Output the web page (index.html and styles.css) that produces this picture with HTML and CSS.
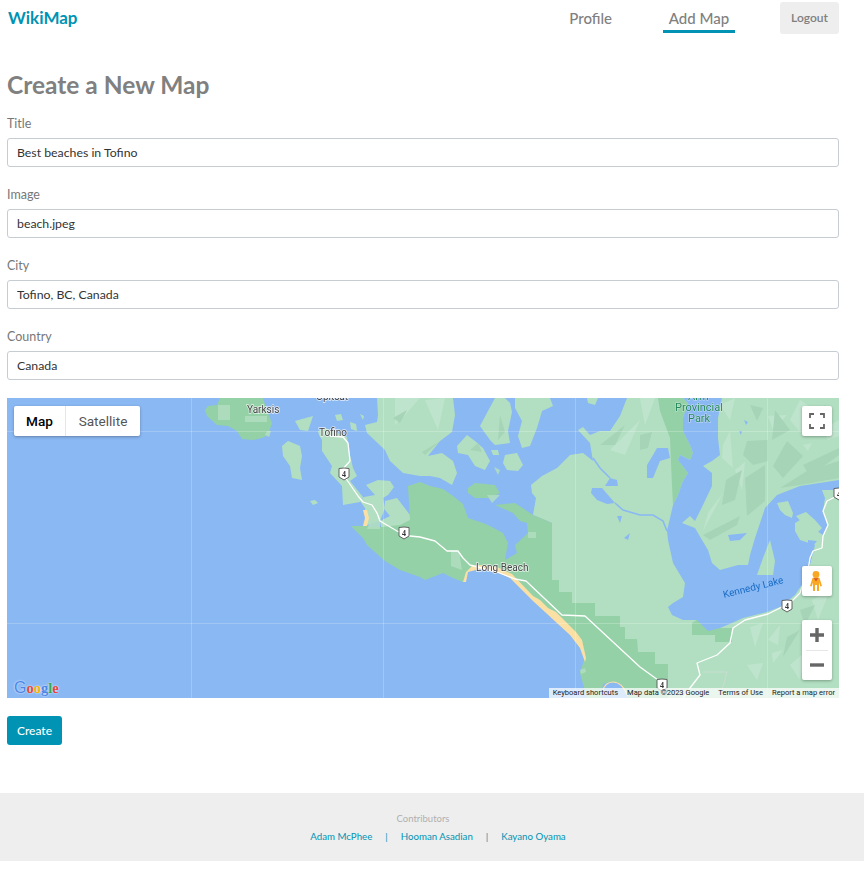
FILE: index.html
```html
<!DOCTYPE html>
<html lang="en">
<head>
<meta charset="utf-8">
<title>WikiMap</title>
<link rel="stylesheet" href="styles.css">
</head>
<body>
<header class="topbar">
  <a class="brand" href="#">WikiMap</a>
  <nav class="nav">
    <a class="nav-link" href="#">Profile</a>
    <a class="nav-link active" href="#">Add Map</a>
    <button class="logout" type="button">Logout</button>
  </nav>
</header>
<main class="content">
  <h1 class="title">Create a New Map</h1>
  <form class="form">
    <div class="field"><label class="label">Title</label><input class="input" value="Best beaches in Tofino"></div>
    <div class="field"><label class="label">Image</label><input class="input" value="beach.jpeg"></div>
    <div class="field"><label class="label">City</label><input class="input" value="Tofino, BC, Canada"></div>
    <div class="field"><label class="label">Country</label><input class="input" value="Canada"></div>
    <div class="map">
      <svg class="map-art" viewBox="7 398 832 300" width="832" height="300">
        <defs>
          <g id="shield">
            <path d="M-5 -5.5Q0 -6.5 5 -5.5V3L0 6L-5 3Z" fill="#fff" stroke="#555" stroke-width="0.9"/>
            <text class="shield-num" x="0" y="2.6" text-anchor="middle">4</text>
          </g>
        </defs>
        <rect class="water" x="7" y="398" width="832" height="300"/>
        <!-- main land mass -->
        <polygon class="land" points="627,398 839,398 839,698 640,698 552,600 552,523 533,515 536,498 532,493 531,485 542,476 557,468 570,455 583,453 593,461 590,443 578,430 583,427 590,435 600,431 610,431 620,416"/>
        <!-- hill shading -->
        <g class="hill-light">
          <polygon points="723,445 730,431 733,468 722,458"/>
          <polygon points="703,531 723,493 708,513"/>
          <polygon points="768,416 787,415 773,430"/>
          <polygon points="785,451 790,461 787,475 783,465"/>
          <polygon points="803,445 812,443 808,451"/>
          <polygon points="720,405 735,398 730,420"/>
          <polygon points="640,398 655,398 645,425"/>
          <polygon points="610,450 640,420 625,455"/>
          <polygon points="750,627 763,623 755,647"/>
          <polygon points="772,653 783,650 773,663"/>
          <polygon points="747,665 763,663 757,680"/>
          <polygon points="812,600 830,590 818,620"/>
          <polygon points="735,470 745,462 742,490"/>
          <polygon points="790,420 800,400 815,410 800,432"/>
          <polygon points="822,430 839,420 839,436 828,440"/>
          <polygon points="768,640 780,625 778,645"/>
          <polygon points="790,665 805,652 800,680"/>
        </g>
        <g class="hill-dark">
          <polygon points="747,441 768,440 768,461 753,465 743,455"/>
          <polygon points="745,478 765,465 765,501 747,516"/>
          <polygon points="703,535 740,516 737,525 710,540"/>
          <polygon points="773,466 787,441 803,456 783,478"/>
          <polygon points="803,465 839,448 839,455 810,476"/>
          <polygon points="750,405 763,408 757,421"/>
          <polygon points="780,488 807,471 839,461 839,478 800,485"/>
          <polygon points="787,637 800,630 783,657"/>
          <polygon points="815,650 830,640 825,670"/>
          <polygon points="640,435 652,432 648,448 640,450"/>
          <polygon points="600,445 625,425 615,445"/>
          <polygon points="726,480 742,470 735,500 722,505"/>
          <polygon points="775,410 790,430 772,440"/>
          <polygon points="810,420 825,405 830,425"/>
          <polygon points="690,540 702,545 695,552"/>
          <polygon points="800,610 815,605 805,625"/>
        </g>
        <!-- islands and peninsulas -->
        <g class="land">
          <polygon points="295,421 313,416 308,431 300,430"/>
          <polygon points="282,446 288,441 300,446 302,456 300,468 302,480 292,478 290,466 283,456"/>
          <polygon points="310,501 315,500 318,503 313,505"/>
          <polygon points="318,431 325,428 347,437 350,455 353,468 357,476 350,481 363,497 360,502 343,505 342,486 330,473 332,466 322,451 322,440 319,435"/>
          <polygon points="366,485 378,480 390,481 394,487 388,495 383,498 385,508 380,521 367,525 365,508 360,501 364,497 375,495"/>
          <polygon points="385,501 397,498 410,515 412,521 403,526 387,540 382,531 380,521 390,516 385,510"/>
          <polygon points="377,398 453,398 455,415 452,432 440,441 428,456 442,453 453,461 457,473 452,485 440,478 430,476 420,476 403,473 390,461 385,450 367,433 365,425 377,422 378,415"/>
          <polygon points="480,426 488,411 495,398 505,398 510,403 512,412 508,431 510,443 495,445 490,440"/>
          <polygon points="515,398 550,398 553,406 542,411 537,428 530,446 522,448 518,436 522,421 515,408"/>
          <polygon points="457,446 467,435 475,441 483,448 490,461 485,470 475,466 468,455 458,453"/>
          <polygon points="491,450 498,450 499,455 493,455"/>
          <polygon points="505,455 517,453 523,465 518,471 507,470 503,463"/>
          <polygon points="587,398 598,398 595,405 588,403"/>
          <polygon points="335,415 341,414 343,420 337,421"/>
          <polygon points="350,422 356,424 357,431 351,429"/>
          <polygon points="360,414 364,416 363,420"/>
        </g>
        <g class="hill-light">
          <polygon points="395,398 420,398 405,415 395,425"/>
          <polygon points="425,400 445,398 438,430"/>
        </g>
        <g class="hill-dark">
          <polygon points="393,418 407,410 400,423"/>
          <polygon points="422,452 440,441 425,455"/>
          <polygon points="470,450 478,443 482,452"/>
          <polygon points="500,415 505,432 498,440"/>
        </g>
        <!-- provincial park green -->
        <g class="park">
          <polygon points="205,410 208,406 217,405 220,398 263,398 267,411 272,423 268,435 262,438 253,440 242,439 237,431 228,426 217,425 207,416"/>
          <polygon points="468,488 475,483 495,485 500,493 490,498 475,498 468,493"/>
          <polygon points="351,526 367,526 382,527 400,525 410,520 408,486 420,482 430,486 443,489 453,496 463,504 468,518 483,523 490,526 503,533 508,543 505,560 517,553 515,545 528,533 527,523 520,521 513,513 495,505 515,503 533,515 552,523 552,580 559,580 559,592 572,592 572,603 595,603 595,616 620,616 620,627 625,627 625,639 637,639 638,652 655,652 655,664 668,664 668,698 587,698 580,673 585,657 580,645 560,623 533,600 510,577 497,572 480,568 468,570 463,582 453,578 443,573 430,578 425,580 420,577 400,570 385,561 367,545 363,538"/>
          <polygon points="658,398 683,398 688,403 683,418 683,431 690,445 693,453 690,460 680,455 678,460 688,473 683,481 678,495 673,505 672,485 670,438 660,411"/>
          <polygon points="692,623 700,618 713,628 732,628 732,642 715,642 715,635 692,635"/>
        </g>
        <g class="patch">
          <polygon points="218,405 230,405 230,420 218,420"/>
          <polygon points="245,416 267,416 267,422 245,422"/>
          <polygon points="267,431 271,431 269,437 265,435"/>
          <polygon points="487,495 500,495 492,503"/>
          <polygon points="528,532 536,532 536,538 528,538"/>
          <polygon points="451,551 459,551 462,570 451,566"/>
          <polygon points="494,467 500,470 498,475"/>
          <polygon points="337,469 345,468 347,480 337,478"/>
          <polygon points="375,510 380,520 380,529 367,529"/>
          <polygon points="580,670 585,668 586,672 581,674"/>
        </g>
        <!-- lakes -->
        <g class="water">
          <polygon points="683,398 722,398 718,418 718,438 720,455 712,461 703,466 712,473 712,486 703,505 695,521 690,516 682,523 695,528 702,540 708,550 712,563 720,570 738,565 748,565 750,555 755,538 765,508 777,495 800,486 839,480 839,490 822,490 825,498 823,511 828,525 823,535 812,528 800,520 795,523 795,531 800,540 815,545 813,553 810,565 803,583 795,595 780,607 767,612 743,618 732,623 720,628 708,631 697,620 683,620 672,615 668,607 673,603 683,597 685,583 673,563 668,540 667,531 673,505 678,495 683,481 688,473 678,460 680,455 690,460 693,453 690,445 683,431 683,418 688,403"/>
          <polygon points="592,488 602,488 615,503 607,504 597,500 591,493"/>
          <polygon points="610,478 617,480 618,486 611,486 605,486"/>
          <polygon points="657,448 668,448 670,458 660,461 653,478 647,478 647,465 653,455"/>
          <polygon points="728,535 747,533 740,540 730,541"/>
          <polygon points="617,516 622,516 620,523"/>
          <polygon points="624,538 630,533 628,540"/>
          <polygon points="744,420 748,422 746,425"/>
          <polygon points="739,431 742,431 741,435"/>
          <polygon points="603,684 610,682 620,683 628,698 601,698"/>
        </g>
        <g class="land">
          <polygon points="777,503 788,501 793,513 792,518 785,515 780,510"/>
          <polygon points="770,540 775,561 773,575 757,575 763,558"/>
          <polygon points="796,516 806,512 815,520 822,528 815,535 806,527"/>
        </g>
        <polygon class="water" points="808,540 817,541 813,546 808,546"/>
        <polyline class="river" points="593,458 600,468 610,478"/>
        <polyline class="river" points="615,503 623,510 640,515 653,515 663,521 667,531"/>
        <!-- beaches -->
        <g class="beach">
          <polygon points="463,582 466,572 472,566 480,565 497,567 512,574 533,596 540,600 548,608 556,612 566,622 576,632 582,640 586,658 585,662 580,648 570,635 558,624 545,612 533,601 510,578 497,572 480,569 468,572 466,582"/>
          <polygon points="363,510 367,510 369,518 367,526 363,526 365,518"/>
          <path class="beach-line" d="M602 692 Q605 682 613 682 Q622 682 628 696"/>
        </g>
        <!-- tile seams -->
        <g class="seam">
          <line x1="7" y1="431.5" x2="839" y2="431.5"/>
          <line x1="7" y1="623.5" x2="839" y2="623.5"/>
          <line x1="191.5" y1="398" x2="191.5" y2="698"/>
          <line x1="383.5" y1="398" x2="383.5" y2="698"/>
          <line x1="575.5" y1="398" x2="575.5" y2="698"/>
          <line x1="767.5" y1="398" x2="767.5" y2="698"/>
        </g>
        <!-- roads -->
        <g class="road">
          <polyline points="330,436 343,437 348,443 350,461 342,470 344,474 347,480 358,496 363,502 372,505 377,513 380,521 397,531 404,533 410,536 420,537 435,541 447,551 458,551 463,558 470,565 497,572 515,579 526,581 562,615 585,616 640,667 658,680 664,695"/>
          <polyline points="683,698 690,688 700,675 697,663 717,655 730,643 733,628 745,620 768,614 782,607 787,606 800,593 808,570 810,558 813,551 822,548 823,536 828,525 823,511 827,501 837,496"/>
        </g>
        <polyline class="track" points="703,672 727,672 722,690"/>
        <use href="#shield" x="344" y="474"/>
        <use href="#shield" x="404" y="533"/>
        <use href="#shield" x="662" y="685"/>
        <use href="#shield" x="787" y="606"/>
        <use href="#shield" x="839" y="494"/>
        <!-- labels -->
        <text class="place" x="316" y="400">Opitsat</text>
        <text class="place" x="247" y="412.5">Yarksis</text>
        <text class="place" x="319" y="435.5">Tofino</text>
        <text class="place" x="476" y="571">Long Beach</text>
        <text class="park-label" x="688" y="400">Arm</text>
        <text class="park-label" x="675" y="411">Provincial</text>
        <text class="park-label" x="688" y="421.5">Park</text>
        <text class="lake-label" transform="translate(724 598) rotate(-14)">Kennedy Lake</text>
      </svg>

      <div class="map-type">
        <span class="map-type-btn selected">Map</span>
        <span class="map-type-btn">Satellite</span>
      </div>

      <div class="ctl fullscreen">
        <svg viewBox="0 0 30 30" width="30" height="30">
          <path class="ctl-line" d="M8 12V8H12M18 8H22V12M22 18V22H18M12 22H8V18"/>
        </svg>
      </div>

      <div class="ctl pegman">
        <svg viewBox="0 0 30 30" width="30" height="30">
          <circle cx="14" cy="8.5" r="3.4" fill="#f9a825"/>
          <path d="M10.5 12Q14 10.5 17.5 12L20 20L18.300 20.500L17 16.500V25H15V19H13V25H11V16.500L9.700 20.500L8 20Z" fill="#f9a825"/>
          <path d="M11.500 11.800L14 15.500L16.500 11.800L14 12.500Z" fill="#d9542b"/>
        </svg>
      </div>

      <div class="ctl zoom">
        <svg viewBox="0 0 30 60" width="30" height="60">
          <path class="ctl-thick" d="M15 8V22M8 15H22"/>
          <line class="ctl-divider" x1="4" y1="30.500" x2="26" y2="30.500"/>
          <path class="ctl-thick" d="M8 45H22"/>
        </svg>
      </div>

      <div class="google"><span class="g-cap">G</span><span class="g-r">o</span><span class="g-y">o</span><span class="g-b">g</span><span class="g-g">l</span><span class="g-r">e</span></div>

      <div class="attribution">
        <span>Keyboard shortcuts</span>
        <span>Map data ©2023 Google</span>
        <span>Terms of Use</span>
        <span>Report a map error</span>
      </div>
    </div>
    <button class="create" type="button">Create</button>
  </form>
</main>
<footer class="footer">
  <p class="contrib">Contributors</p>
  <p class="people">
    <a href="#">Adam McPhee</a><span class="bar">|</span><a href="#">Hooman Asadian</a><span class="bar">|</span><a href="#">Kayano Oyama</a>
  </p>
</footer>
</body>
</html>
```
FILE: styles.css
```css
* { box-sizing: border-box; }

body {
  margin: 0;
  background: #fff;
  font-family: "Lato", "Noto Sans", sans-serif;
  color: #808080;
}

a { text-decoration: none; }

.topbar {
  display: flex;
  justify-content: space-between;
  align-items: flex-start;
  padding: 2px 25px 0 8px;
  height: 34px;
}

.brand {
  color: #0093b3;
  font-size: 17px;
  font-weight: 700;
  line-height: 32px;
}

.nav {
  display: flex;
  gap: 45px;
  align-items: flex-start;
}

.nav-link {
  color: #808080;
  font-size: 15px;
  font-weight: 500;
  line-height: 32px;
  height: 31px;
  padding: 0 6px;
}

.nav-link.active {
  border-bottom: 3px solid #0093b3;
  width: 72px;
  text-align: center;
  padding: 0;
}

.logout {
  width: 59px;
  height: 32px;
  border: 0;
  border-radius: 3px;
  background: #eee;
  color: #808080;
  font: 600 12px "Lato", sans-serif;
  padding-bottom: 2px;
}

.content { padding: 36px 25px 0 7px; }

.title {
  margin: 0 0 16px;
  font-size: 24.500px;
  line-height: 30px;
  font-weight: 700;
  color: #808080;
}

.form { display: flex; flex-direction: column; }

.field {
  display: flex;
  flex-direction: column;
  gap: 6px;
  margin-bottom: 20px;
}

.field:nth-child(4) { margin-bottom: 18px; }

.label {
  font-size: 12.500px;
  line-height: 16px;
  color: #777;
}

.input {
  height: 29px;
  width: 100%;
  border: 1px solid #c6ccd2;
  border-radius: 3px;
  padding: 0 9px;
  font: 12.300px "Lato", sans-serif;
  color: #333;
  background: #fff;
}

.map {
  position: relative;
  width: 832px;
  height: 300px;
  overflow: hidden;
  font-family: "Roboto", sans-serif;
}

.map-art { display: block; filter: blur(0.35px); }

.water { fill: #8ab8f3; }
.land { fill: #b2dfc1; }
.park { fill: #94d1a6; }
.patch { fill: #b2dfc1; opacity: 0.85; }
.hill-light { fill: #bfe4cd; }
.hill-dark { fill: #a6d4b7; }
.beach { fill: #fbe0a6; }
.beach-line { fill: none; stroke: #fbe0a6; stroke-width: 1.200; }
.seam line { stroke: rgba(255, 255, 255, 0.22); stroke-width: 1; }
.road polyline { fill: none; stroke: #fff; stroke-width: 1.300; stroke-linejoin: round; }
.river { fill: none; stroke: #8ab8f3; stroke-width: 1.600; }
.track { fill: none; stroke: #c9ddd2; stroke-width: 1; }

.shield-num {
  font: 700 8px "Liberation Serif", serif;
  fill: #333;
}

.place {
  font: 400 10px "Roboto", sans-serif;
  fill: #444;
  stroke: #fff;
  stroke-width: 1.500px;
  stroke-opacity: 0.75;
  paint-order: stroke;
}

.park-label {
  font: 400 11px "Roboto", sans-serif;
  fill: #26875a;
  stroke: #fff;
  stroke-width: 1px;
  stroke-opacity: 0.5;
  paint-order: stroke;
}

.lake-label {
  font: 400 10px "Roboto", sans-serif;
  fill: #1a6cc4;
}

.map-type {
  position: absolute;
  left: 7px;
  top: 8px;
  display: flex;
  height: 30px;
  background: #fff;
  border-radius: 2px;
  box-shadow: 0 1px 3px rgba(0, 0, 0, 0.3);
}

.map-type-btn {
  display: flex;
  align-items: center;
  justify-content: center;
  font-size: 13.600px;
  color: #565656;
  width: 74px;
}

.map-type-btn.selected {
  width: 52px;
  color: #000;
  font-weight: 500;
  font-size: 13.600px;
  border-right: 1px solid #e6e6e6;
}

.ctl {
  position: absolute;
  left: 795px;
  width: 30px;
  background: #fff;
  border-radius: 2px;
  box-shadow: 0 1px 3px rgba(0, 0, 0, 0.3);
}

.ctl svg { display: block; }
.fullscreen { top: 8px; height: 30px; }
.pegman { top: 168px; height: 30px; }
.zoom { top: 222px; height: 60px; }

.ctl-line { fill: none; stroke: #666; stroke-width: 1.800; }
.ctl-thick { fill: none; stroke: #666; stroke-width: 3.400; }
.ctl-divider { stroke: #e6e6e6; stroke-width: 1; }

.google {
  position: absolute;
  left: 7px;
  bottom: 1px;
  font: 700 14.500px "Liberation Serif", serif;
  text-shadow: 0 0 2px #fff;
}

.g-cap { color: #4a86e8; font-size: 16px; font-family: "Liberation Sans", sans-serif; font-weight: 400; }
.g-b { color: #4a86e8; }
.g-r { color: #e8453c; }
.g-y { color: #f4b400; }
.g-g { color: #34a853; }

.attribution {
  position: absolute;
  right: 0;
  bottom: 0;
  display: flex;
  height: 10px;
  align-items: center;
  gap: 9px;
  padding: 0 4px;
  background: rgba(255, 255, 255, 0.72);
  font-size: 7.550px;
  line-height: 10px;
  color: #222;
  white-space: nowrap;
}

.create {
  align-self: flex-start;
  margin-top: 18px;
  width: 55px;
  height: 29px;
  border: 0;
  border-radius: 3px;
  background: #0093b3;
  color: #fff;
  font: 500 12px "Lato", sans-serif;
}

.footer {
  margin-top: 48px;
  height: 68px;
  background: #eee;
  text-align: center;
  padding-top: 20px;
}

.contrib {
  margin: 0;
  padding-right: 18px;
  font-size: 9.500px;
  line-height: 12px;
  color: #b0b0b0;
}

.people {
  margin: 5px 0 0;
  padding-left: 12px;
  font-size: 9.700px;
  line-height: 13px;
}

.people a { color: #0093b3; }
.bar { color: #0093b3; margin: 0 13px; }
```
